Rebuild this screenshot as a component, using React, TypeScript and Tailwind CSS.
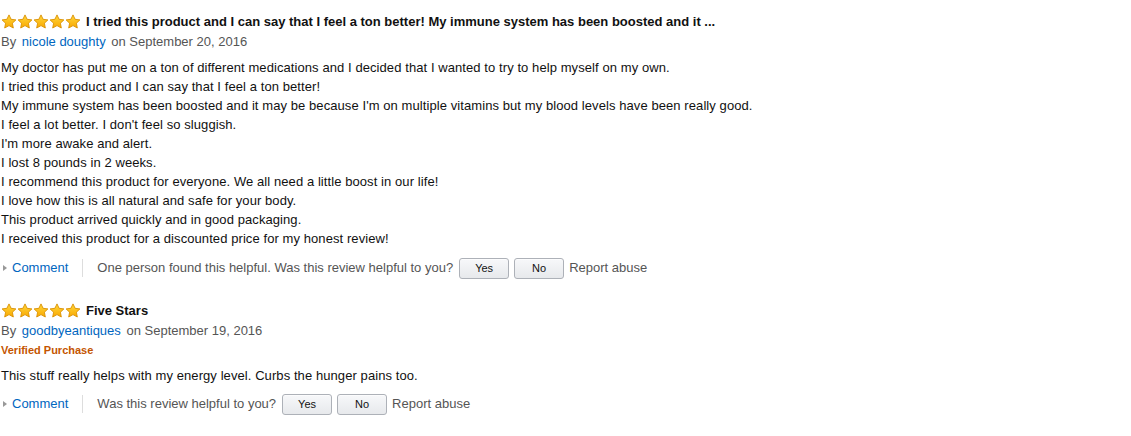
import { FC } from "react";

const Star: FC = () => (
  <svg width="16" height="16" viewBox="0 0 16 16">
    <defs>
      <linearGradient id="starFill" x1="0" y1="0" x2="0" y2="1">
        <stop offset="0" stopColor="#ffd83d" />
        <stop offset="1" stopColor="#f9a800" />
      </linearGradient>
    </defs>
    <path
      d="M8 0.9 L10.1 5.3 L14.9 5.9 L11.4 9.2 L12.3 14 L8 11.6 L3.7 14 L4.6 9.2 L1.1 5.9 L5.9 5.3 Z"
      fill="url(#starFill)"
      stroke="#d99000"
      strokeWidth="0.9"
      strokeLinejoin="round"
    />
  </svg>
);

const Stars: FC = () => (
  <span className="inline-flex items-center gap-0 mr-[5px]">
    {[1, 2, 3, 4, 5].map((s) => (
      <Star key={s} />
    ))}
  </span>
);

const HelpButton: FC<{ label: string }> = ({ label }) => (
  <button className="h-[21px] w-[50px] rounded-[3px] border border-[#adb1b8] bg-gradient-to-b from-[#f7f8fa] to-[#e7e9ec] text-[11px] leading-[19px] text-[#111] shadow-[0_1px_0_rgba(255,255,255,0.6)_inset]">
    {label}
  </button>
);

type ReviewProps = {
  title: string;
  author: string;
  date: string;
  verified?: boolean;
  lines: string[];
  helpful?: string;
};

const Review: FC<ReviewProps> = ({ title, author, date, verified, lines, helpful }) => {
  return (
    <div className="pl-px">
      {/* Title row */}
      <div className="flex items-center h-[19px]">
        <Stars />
        <span className="text-[13px] font-bold leading-[19px] text-[#111]">{title}</span>
      </div>
      {/* Byline */}
      <div className="mt-[1px] text-[13px] leading-[19px] text-[#555]">
        By <a className="text-[#0066c0] mx-[2px]">{author}</a> on {date}
      </div>
      {verified && (
        <div className="mt-[1px] text-[11px] font-bold leading-[19px] text-[#c45500]">
          Verified Purchase
        </div>
      )}
      {/* Body */}
      <div className={`${verified ? "mt-[6px]" : "mt-[7px]"} text-[13px] leading-[19px] tracking-[0.08px] text-[#111]`}>
        {lines.map((l, i) => (
          <div key={i}>{l}</div>
        ))}
      </div>
      {/* Action row */}
      <div className={`${verified ? "mt-[8px]" : "mt-[9px]"} flex items-center h-[22px] text-[13px] text-[#555]`}>
        <span className="ml-[2px] mr-[5px] inline-block w-0 h-0 border-y-[3px] border-y-transparent border-l-[4px] border-l-[#999]" />
        <a className="text-[#0066c0]">Comment</a>
        <span className="mx-[14px] h-[18px] w-px bg-[#ddd]" />
        <span className="mr-[6px]">
          {helpful ? `${helpful} ` : ""}Was this review helpful to you?
        </span>
        <div className="flex gap-[5px]">
          <HelpButton label="Yes" />
          <HelpButton label="No" />
        </div>
        <span className="ml-[5px]">Report abuse</span>
      </div>
    </div>
  );
};

const App: FC = () => {
  return (
    <div
      className="w-[1131px] h-[436px] bg-white pt-[12px] overflow-hidden"
      style={{ fontFamily: '"Liberation Sans", Arial, sans-serif' }}
    >
      <Review
        title="I tried this product and I can say that I feel a ton better! My immune system has been boosted and it ..."
        author="nicole doughty"
        date="September 20, 2016"
        helpful="One person found this helpful."
        lines={[
          "My doctor has put me on a ton of different medications and I decided that I wanted to try to help myself on my own.",
          "I tried this product and I can say that I feel a ton better!",
          "My immune system has been boosted and it may be because I'm on multiple vitamins but my blood levels have been really good.",
          "I feel a lot better. I don't feel so sluggish.",
          "I'm more awake and alert.",
          "I lost 8 pounds in 2 weeks.",
          "I recommend this product for everyone. We all need a little boost in our life!",
          "I love how this is all natural and safe for your body.",
          "This product arrived quickly and in good packaging.",
          "I received this product for a discounted price for my honest review!",
        ]}
      />
      <div className="h-[22px]" />
      <Review
        title="Five Stars"
        author="goodbyeantiques"
        date="September 19, 2016"
        verified
        lines={["This stuff really helps with my energy level. Curbs the hunger pains too."]}
      />
    </div>
  );
};

export default App;
